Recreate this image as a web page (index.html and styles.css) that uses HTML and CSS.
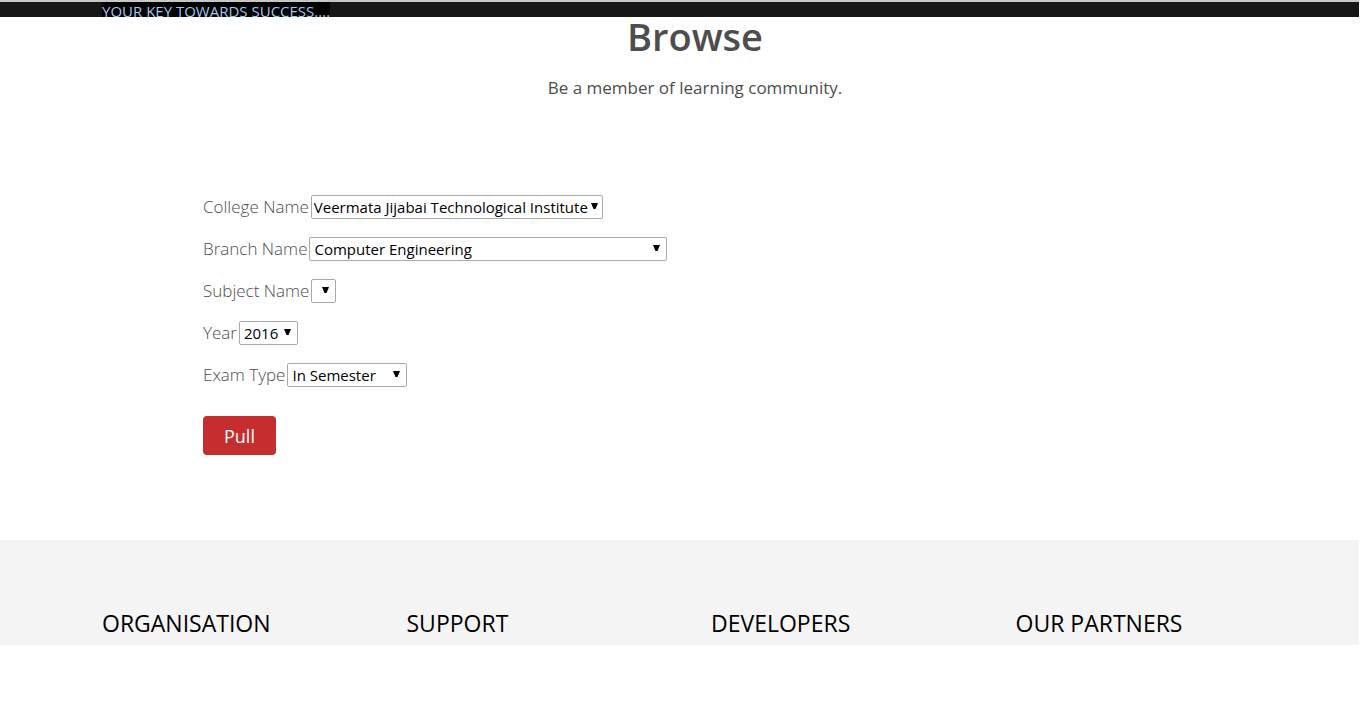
FILE: index.html
```
<!DOCTYPE html>
<html lang="en">
<head>
<meta charset="utf-8">
<title>Browse</title>
<link rel="stylesheet" href="styles.css">
</head>
<body>
<div class="page">
  <header class="topbar"><span class="tagline">YOUR KEY TOWARDS SUCCESS....</span></header>
  <main class="main">
    <div class="intro">
      <h1 class="title">Browse</h1>
      <p class="lead">Be a member of learning community.</p>
    </div>
    <form class="form">
      <div class="row">
        <label for="college">College Name</label>
        <select id="college" class="select college"><option>Veermata Jijabai Technological Institute</option></select>
      </div>
      <div class="row">
        <label for="branch">Branch Name</label>
        <select id="branch" class="select branch"><option>Computer Engineering</option></select>
      </div>
      <div class="row">
        <label for="subject">Subject Name</label>
        <select id="subject" class="select subject"></select>
      </div>
      <div class="row">
        <label for="year">Year</label>
        <select id="year" class="select year"><option>2016</option></select>
      </div>
      <div class="row">
        <label for="exam">Exam Type</label>
        <select id="exam" class="select exam"><option>In Semester</option></select>
      </div>
      <button class="pull" type="button">Pull</button>
    </form>
  </main>
  <footer class="footer">
    <h2 class="heading">ORGANISATION</h2>
    <h2 class="heading">SUPPORT</h2>
    <h2 class="heading">DEVELOPERS</h2>
    <h2 class="heading">OUR PARTNERS</h2>
  </footer>
</div>
</body>
</html>
```
FILE: styles.css
```
* { box-sizing: border-box; }
body {
  margin: 0;
  background: #fff;
  color: #4d4d4d;
  font: 17px/24px "Open Sans", sans-serif;
}
.page { margin-right: 7px; }
.topbar {
  display: flex;
  align-items: flex-start;
  height: 17px;
  overflow: hidden;
  padding-left: 102px;
  border-top: 2px solid #c4c8c8;
  background: #161616;
}
.tagline {
  background: #000;
  color: #a3c8ee;
  font-size: 15px;
  line-height: 18px;
}
.main { padding: 0 71px 85px 102px; }
.intro { text-align: center; }
.title {
  margin: 0;
  font-size: 38px;
  font-weight: 600;
  line-height: 38px;
}
.lead { margin: 0; padding-top: 21px; }
.form {
  display: flex;
  flex-direction: column;
  align-items: flex-start;
  gap: 18px;
  padding: 95px 0 0 101px;
}
.row {
  display: flex;
  align-items: center;
  gap: 2px;
  line-height: 22px;
  min-height: 24px;
  font-weight: 300;
}
.select {
  appearance: none;
  height: 24px;
  margin: 0;
  padding: 0 10px 0 4px;
  border: 1px solid #a9a9a9;
  border-radius: 2px;
  background: #fff url("data:image/svg+xml,%3Csvg xmlns='http://www.w3.org/2000/svg' width='7' height='6'%3E%3Cpath d='M0 0h7L4.5 6h-2z'/%3E%3C/svg%3E") no-repeat right 6px top 7px;
  color: #000;
  font: 15px/20px "Open Sans", sans-serif;
}
.college { width: 292px; padding-left: 2px; background-position: right 4px top 7px; }
.branch { width: 358px; }
.subject { width: 25px; padding: 0; }
.year { width: 59px; }
.exam { width: 120px; }
.pull {
  height: 39px;
  margin-top: 11px;
  padding: 0 21px;
  border: 0;
  border-radius: 4px;
  background: #c62d2f;
  color: #fff;
  font: 18px/24px "Open Sans", sans-serif;
}
.footer {
  display: grid;
  grid-template-columns: repeat(4, 1fr);
  padding: 67px 39px 6px 102px;
  background: #f4f4f4;
}
.heading {
  margin: 0;
  color: #000;
  font-size: 23px;
  font-weight: 400;
  line-height: 32px;
}
```
